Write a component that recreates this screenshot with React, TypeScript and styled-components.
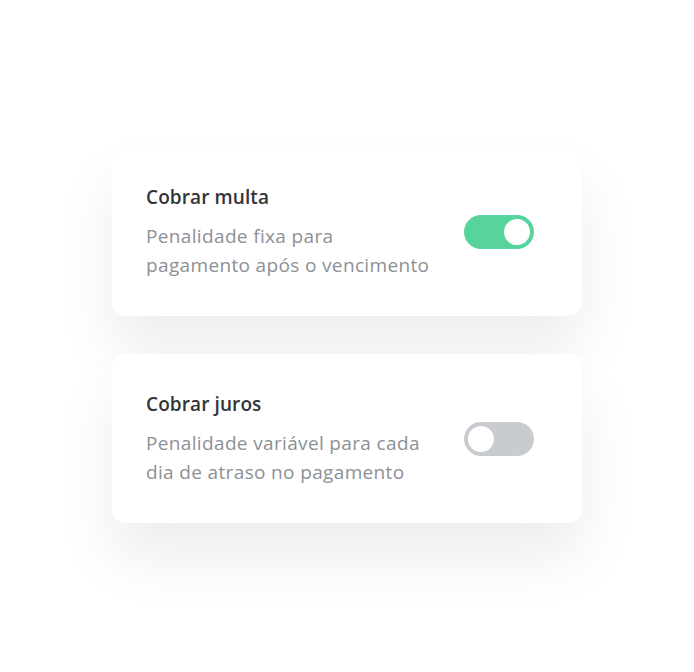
import React from "react";
import styled, { createGlobalStyle } from "styled-components";

const Global = createGlobalStyle`
  html, body { margin: 0; padding: 0; background: #ffffff; }
  body { font-family: "Open Sans", "Noto Sans", sans-serif; -webkit-font-smoothing: antialiased; }
`;

const Page = styled.div`
  width: 694px;
  min-height: 672px;
  display: flex;
  flex-direction: column;
  align-items: center;
  padding-top: 147px;
  gap: 38px;
  box-sizing: border-box;
`;

const Card = styled.div`
  width: 470px;
  height: 169px;
  box-sizing: border-box;
  background: #ffffff;
  border-radius: 14px;
  box-shadow: 0 35px 60px rgba(0, 0, 0, 0.075);
  padding: 0 48px 0 34px;
  display: flex;
  align-items: center;
  justify-content: space-between;
`;

const TextCol = styled.div`
  display: flex;
  flex-direction: column;
  align-self: flex-start;
  margin-top: 38px;
`;

const Title = styled.div`
  font-size: 19px;
  font-weight: 600;
  color: #333436;
  line-height: 24px;
  letter-spacing: 0.1px;
`;

const Desc = styled.div`
  margin-top: 13px;
  font-size: 19px;
  color: #8c9096;
  line-height: 29px;
  letter-spacing: 0.35px;
`;

const Track = styled.div<{ $on: boolean }>`
  width: 70px;
  height: 34px;
  border-radius: 17px;
  background: ${(p) => (p.$on ? "#57d49b" : "#c8cbcf")};
  display: flex;
  align-items: center;
  justify-content: ${(p) => (p.$on ? "flex-end" : "flex-start")};
  padding: 0 4px;
  box-sizing: border-box;
  flex-shrink: 0;
`;

const Knob = styled.div`
  width: 26px;
  height: 26px;
  border-radius: 50%;
  background: #ffffff;
`;

const Setting = ({ title, lines, on }: { title: string; lines: string[]; on: boolean }) => (
  <Card>
    <TextCol>
      <Title>{title}</Title>
      <Desc>
        {lines[0]}
        <br />
        {lines[1]}
      </Desc>
    </TextCol>
    <Track $on={on}>
      <Knob />
    </Track>
  </Card>
);

export default function App() {
  return (
    <>
      <Global />
      <Page>
        <Setting
          title="Cobrar multa"
          lines={["Penalidade fixa para", "pagamento após o vencimento"]}
          on
        />
        <Setting
          title="Cobrar juros"
          lines={["Penalidade variável para cada", "dia de atraso no pagamento"]}
          on={false}
        />
      </Page>
    </>
  );
}
